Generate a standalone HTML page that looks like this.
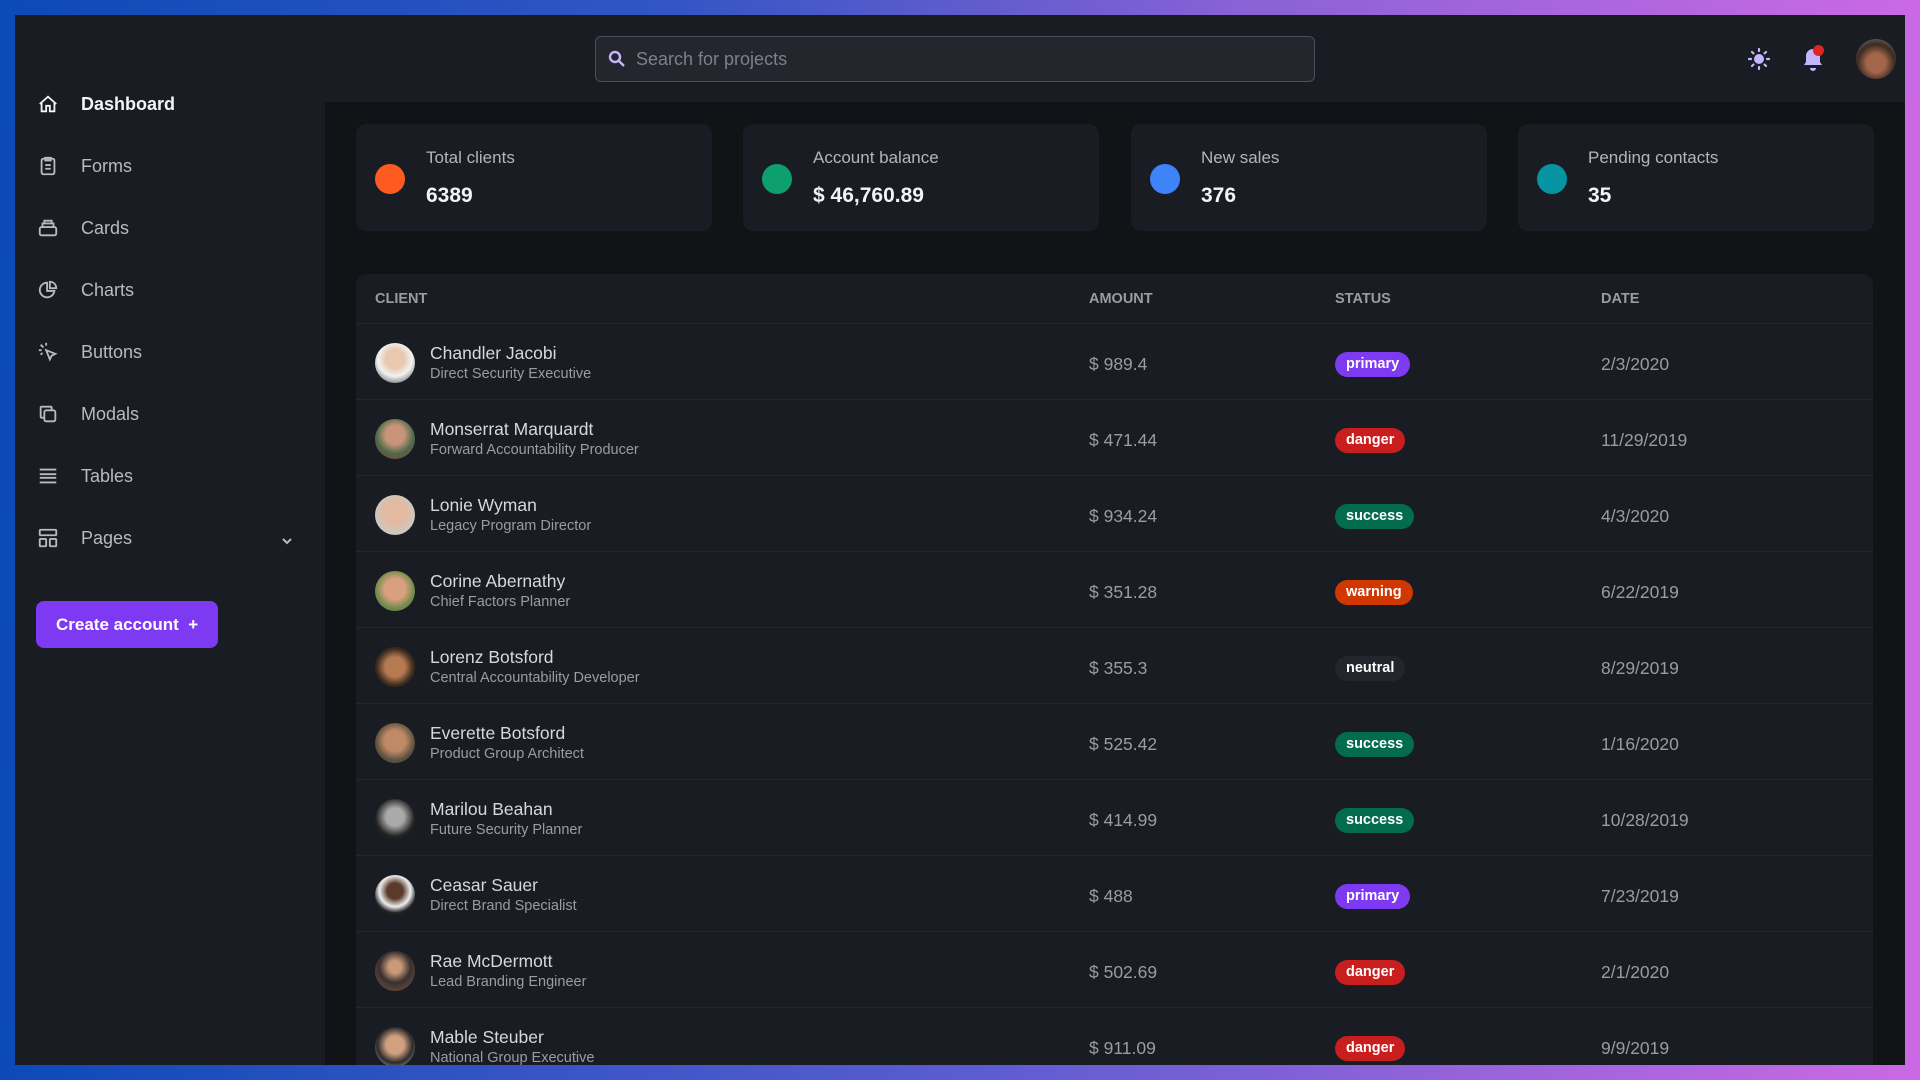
<!DOCTYPE html>
<html><head><meta charset="utf-8"><style>
*{box-sizing:border-box;margin:0;padding:0}
body{width:1920px;height:1080px;overflow:hidden;font-family:"Liberation Sans",sans-serif;background:linear-gradient(90deg,#0c4ab8 0%,#3355c4 35%,#8a62d6 65%,#cb69e4 100%)}
.bot{position:absolute;left:0;right:0;bottom:0;height:20px;background:linear-gradient(90deg,#0c4ab8,#5a5cd0 50%,#cb69e4)}
.app{position:absolute;left:15px;top:15px;width:1890px;height:1050px;background:#121317;overflow:hidden}
.side{position:absolute;left:0;top:0;width:310px;height:1050px;background:#1a1c23}
.hdr{position:absolute;left:310px;top:0;right:0;height:87px;background:#1a1c23}
.search{position:absolute;left:270px;top:21px;width:720px;height:46px;background:#24262d;border:1px solid #4c4f57;border-radius:6px;color:#7d8089;font-size:18px;padding:12px 0 0 40px}
.nav{position:absolute;left:22px;display:flex;align-items:center;color:#b8bac0;font-size:18px}
.nav svg{width:22px;height:22px;margin-right:22px}
.nav.act{color:#f3f4f6;font-weight:bold}
.btn{position:absolute;left:21px;top:586px;width:182px;height:47px;background:#7e3af2;border-radius:8px;color:#fff;font-weight:bold;font-size:17px;padding:14px 0 0 20px}
.card{position:absolute;top:109px;width:356px;height:107px;background:#1a1c23;border-radius:10px}
.dot{position:absolute;left:19px;top:40px;width:30px;height:30px;border-radius:50%}
.card .l{position:absolute;left:70px;top:24px;color:#b3b5bb;font-size:17px}
.card .v{position:absolute;left:70px;top:60px;color:#f3f4f6;font-size:21px;font-weight:bold}
.tbl{position:absolute;left:341px;top:259px;width:1517px;height:791px;background:#1a1c23;border-radius:10px 10px 0 0;overflow:hidden}
.th{position:absolute;top:17px;color:#9a9ca3;font-size:14.5px;font-weight:bold}
.row{position:absolute;left:0;width:1517px;height:76px;border-top:1px solid #24262d}
.av{position:absolute;left:19px;top:19px;width:40px;height:40px;border-radius:50%}
.nm{position:absolute;left:74px;top:19px;color:#d6d8dc;font-size:17.5px}
.sb{position:absolute;left:74px;top:42px;color:#9a9ca3;font-size:14.5px}
.am{position:absolute;left:733px;top:30px;color:#9a9ca3;font-size:17.5px}
.bd{position:absolute;left:979px;top:28px;height:25px;border-radius:13px;color:#fff;font-weight:bold;font-size:14.5px;padding:4px 11px 0}
.dt{position:absolute;left:1245px;top:30px;color:#9a9ca3;font-size:17.5px}
</style></head><body><div class="bot"></div>
<div class="app">
<div class="side">
<div class="nav act" style="top:78px"><svg viewBox="0 0 24 24" fill="none" stroke="currentColor" stroke-width="2"><path d="M3 12l9-8 9 8M5 10v10h5v-6h4v6h5V10"/></svg>Dashboard</div>
<div class="nav" style="top:140px"><svg viewBox="0 0 24 24" fill="none" stroke="currentColor" stroke-width="2"><rect x="5" y="4" width="14" height="17" rx="2"/><path d="M9 3h6v3H9zM9 11h6M9 15h6"/></svg>Forms</div>
<div class="nav" style="top:202px"><svg viewBox="0 0 24 24" fill="none" stroke="currentColor" stroke-width="2"><rect x="3" y="11" width="18" height="9" rx="2"/><path d="M6 11V7h12v4M8 7V4h8v3"/></svg>Cards</div>
<div class="nav" style="top:264px"><svg viewBox="0 0 24 24" fill="none" stroke="currentColor" stroke-width="2"><path d="M11 4a8 8 0 108 9h-8z"/><path d="M14 3v7h7a7 7 0 00-7-7z"/></svg>Charts</div>
<div class="nav" style="top:326px"><svg viewBox="0 0 24 24" fill="none" stroke="currentColor" stroke-width="2"><path d="M10 10l10 4-4 2-2 4zM4 4l3 3M10 2v3M2 10h3M4 15l2-2"/></svg>Buttons</div>
<div class="nav" style="top:388px"><svg viewBox="0 0 24 24" fill="none" stroke="currentColor" stroke-width="2"><rect x="8" y="8" width="12" height="12" rx="2"/><path d="M16 8V5a1 1 0 00-1-1H5a1 1 0 00-1 1v10a1 1 0 001 1h3"/></svg>Modals</div>
<div class="nav" style="top:450px"><svg viewBox="0 0 24 24" fill="none" stroke="currentColor" stroke-width="2"><path d="M3 5h18M3 10h18M3 14h18M3 19h18"/></svg>Tables</div>
<div class="nav" style="top:512px"><svg viewBox="0 0 24 24" fill="none" stroke="currentColor" stroke-width="2"><rect x="3" y="3" width="18" height="6" rx="1"/><rect x="3" y="13" width="7" height="8" rx="1"/><rect x="14" y="13" width="7" height="8" rx="1"/></svg>Pages</div>
<svg style="position:absolute;left:265px;top:519px" width="14" height="14" viewBox="0 0 14 14" fill="none" stroke="#b8bac0" stroke-width="2"><path d="M3 5l4 4 4-4"/></svg>
<div class="btn">Create account &nbsp;+</div>
</div>
<div class="hdr">
<div class="search"><svg style="position:absolute;left:12px;top:13px" width="18" height="18" viewBox="0 0 18 18" fill="none" stroke="#c4b5fd" stroke-width="2.4"><circle cx="7" cy="7" r="5"/><path d="M11 11l5 5"/></svg>Search for projects</div>
<svg style="position:absolute;left:1423px;top:33px" width="22" height="22" viewBox="0 0 22 22" fill="#c4b5fd"><circle cx="11" cy="11" r="5"/><g stroke="#c4b5fd" stroke-width="2.2" stroke-linecap="round"><path d="M11 1v2M11 19v2M1 11h2M19 11h2M4 4l1.4 1.4M16.6 16.6L18 18M4 18l1.4-1.4M16.6 5.4L18 4"/></g></svg>
<svg style="position:absolute;left:1477px;top:32px" width="22" height="26" viewBox="0 0 22 26" fill="#c4b5fd"><path d="M11 2a7 7 0 00-7 7v6l-2 3h18l-2-3V9a7 7 0 00-7-7zM8 21a3 3 0 006 0z"/></svg>
<div style="position:absolute;left:1488px;top:30px;width:11px;height:11px;border-radius:50%;background:#e02424"></div>
<div style="position:absolute;left:1531px;top:24px;width:40px;height:40px;border-radius:50%;background:radial-gradient(circle at 50% 60%,#a4664a 30%,#3a2a22 60%,#8a8a8a)"></div>
</div>
<div class="card" style="left:341px"><div class="dot" style="background:#ff5a1f"></div><div class="l">Total clients</div><div class="v">6389</div></div>
<div class="card" style="left:728px"><div class="dot" style="background:#0e9f6e"></div><div class="l">Account balance</div><div class="v">$ 46,760.89</div></div>
<div class="card" style="left:1116px"><div class="dot" style="background:#3f83f8"></div><div class="l">New sales</div><div class="v">376</div></div>
<div class="card" style="left:1503px"><div class="dot" style="background:#0694a2"></div><div class="l">Pending contacts</div><div class="v">35</div></div>
<div class="tbl">
<div class="th" style="left:19px">CLIENT</div><div class="th" style="left:733px">AMOUNT</div><div class="th" style="left:979px">STATUS</div><div class="th" style="left:1245px">DATE</div>
<div class="row" style="top:49px"><div class="av" style="background:radial-gradient(circle at 50% 40%,#e8c9b0 30%,#f2f2f2 55%,#333)"></div><div class="nm">Chandler Jacobi</div><div class="sb">Direct Security Executive</div><div class="am">$ 989.4</div><div class="bd" style="background:#7e3af2">primary</div><div class="dt">2/3/2020</div></div>
<div class="row" style="top:125px"><div class="av" style="background:radial-gradient(circle at 50% 40%,#c9957a 30%,#4a6a4a 60%,#a33)"></div><div class="nm">Monserrat Marquardt</div><div class="sb">Forward Accountability Producer</div><div class="am">$ 471.44</div><div class="bd" style="background:#c81e1e">danger</div><div class="dt">11/29/2019</div></div>
<div class="row" style="top:201px"><div class="av" style="background:radial-gradient(circle at 50% 45%,#e3b9a0 35%,#cfc6bd 65%)"></div><div class="nm">Lonie Wyman</div><div class="sb">Legacy Program Director</div><div class="am">$ 934.24</div><div class="bd" style="background:#046c4e">success</div><div class="dt">4/3/2020</div></div>
<div class="row" style="top:277px"><div class="av" style="background:radial-gradient(circle at 50% 45%,#d8a07e 35%,#6f8a4a 65%)"></div><div class="nm">Corine Abernathy</div><div class="sb">Chief Factors Planner</div><div class="am">$ 351.28</div><div class="bd" style="background:#d03801">warning</div><div class="dt">6/22/2019</div></div>
<div class="row" style="top:353px"><div class="av" style="background:radial-gradient(circle at 50% 50%,#b57a50 35%,#3a2a1e 65%)"></div><div class="nm">Lorenz Botsford</div><div class="sb">Central Accountability Developer</div><div class="am">$ 355.3</div><div class="bd" style="background:#24262d">neutral</div><div class="dt">8/29/2019</div></div>
<div class="row" style="top:429px"><div class="av" style="background:radial-gradient(circle at 50% 45%,#c08a66 35%,#5a5040 65%)"></div><div class="nm">Everette Botsford</div><div class="sb">Product Group Architect</div><div class="am">$ 525.42</div><div class="bd" style="background:#046c4e">success</div><div class="dt">1/16/2020</div></div>
<div class="row" style="top:505px"><div class="av" style="background:radial-gradient(circle at 50% 45%,#aaa 30%,#222 65%)"></div><div class="nm">Marilou Beahan</div><div class="sb">Future Security Planner</div><div class="am">$ 414.99</div><div class="bd" style="background:#046c4e">success</div><div class="dt">10/28/2019</div></div>
<div class="row" style="top:581px"><div class="av" style="background:radial-gradient(circle at 50% 40%,#5a3a2a 25%,#eee 50%,#222 70%)"></div><div class="nm">Ceasar Sauer</div><div class="sb">Direct Brand Specialist</div><div class="am">$ 488</div><div class="bd" style="background:#7e3af2">primary</div><div class="dt">7/23/2019</div></div>
<div class="row" style="top:657px"><div class="av" style="background:radial-gradient(circle at 50% 40%,#c89a7a 20%,#3a3030 50%,#7a5a40)"></div><div class="nm">Rae McDermott</div><div class="sb">Lead Branding Engineer</div><div class="am">$ 502.69</div><div class="bd" style="background:#c81e1e">danger</div><div class="dt">2/1/2020</div></div>
<div class="row" style="top:733px"><div class="av" style="background:radial-gradient(circle at 50% 45%,#d0a080 30%,#2a2a2a 60%,#ddd)"></div><div class="nm">Mable Steuber</div><div class="sb">National Group Executive</div><div class="am">$ 911.09</div><div class="bd" style="background:#c81e1e">danger</div><div class="dt">9/9/2019</div></div>
</div>
</div>
</body></html>
